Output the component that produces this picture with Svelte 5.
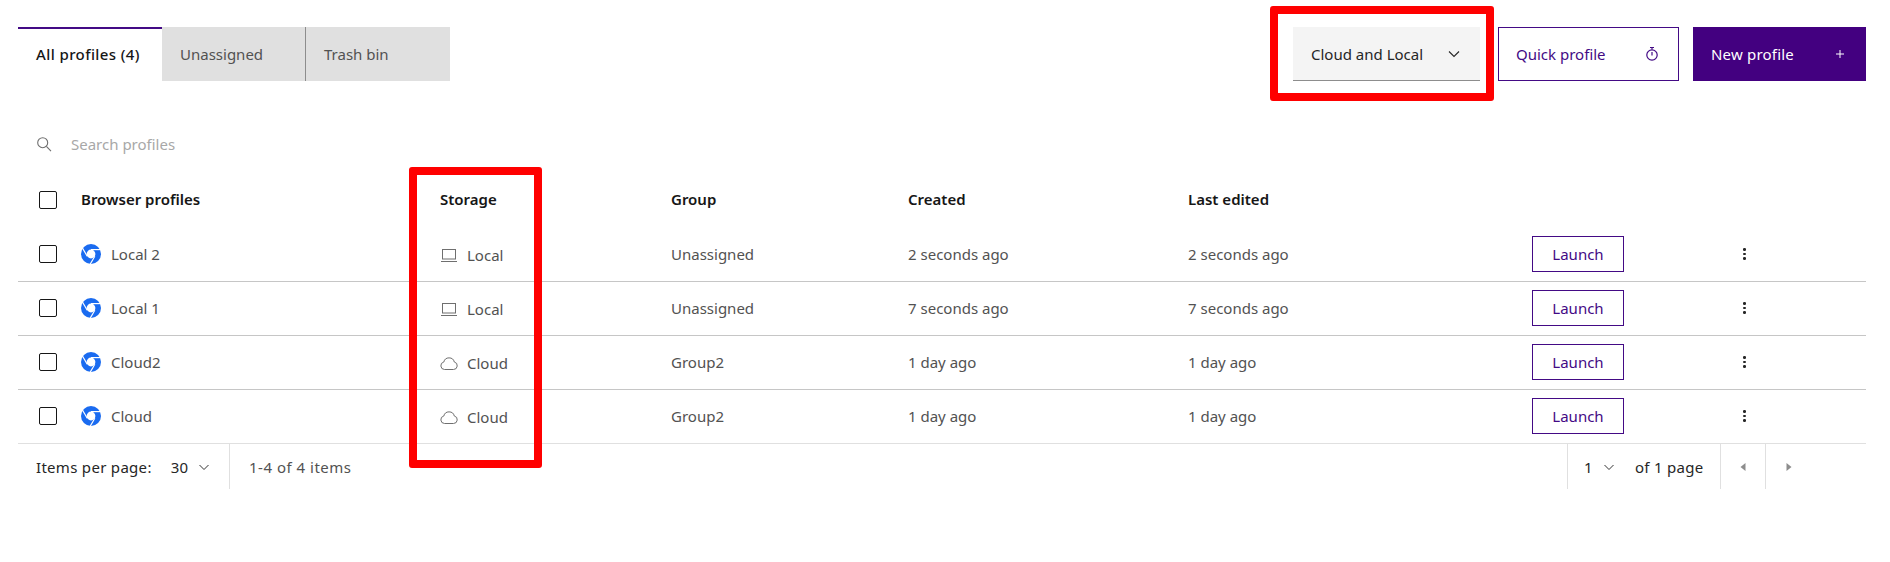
<script>
  const rows = [
    { name: 'Local 2', storage: 'Local', group: 'Unassigned', created: '2 seconds ago' },
    { name: 'Local 1', storage: 'Local', group: 'Unassigned', created: '7 seconds ago' },
    { name: 'Cloud2', storage: 'Cloud', group: 'Group2', created: '1 day ago' },
    { name: 'Cloud', storage: 'Cloud', group: 'Group2', created: '1 day ago' }
  ];
</script>

<div class="page">
  <div class="top">
    <div class="tabs">
      <div class="tab active">All profiles (4)</div>
      <div class="tab">Unassigned</div>
      <div class="tab last">Trash bin</div>
    </div>
    <div class="actions">
      <div class="select">
        <span>Cloud and Local</span>
        <svg width="16" height="16" viewBox="0 0 16 16"><path d="M3 5.500l5 5 5-5" fill="none" stroke="#262626" stroke-width="1.100"/></svg>
      </div>
      <div class="btn quick">
        <span>Quick profile</span>
        <svg width="16" height="16" viewBox="0 0 16 16" fill="none" stroke="#430a85" stroke-width="1.200">
          <circle cx="8" cy="9" r="5.200"/><path d="M6 1.500h4M8 1.500v2M8 6v3.400"/>
        </svg>
      </div>
      <div class="btn primary">
        <span>New profile</span>
        <svg width="16" height="16" viewBox="0 0 16 16"><path d="M8 4v8M4 8h8" stroke="#fff" stroke-width="1"/></svg>
      </div>
    </div>
  </div>

  <div class="search">
    <svg width="16" height="16" viewBox="0 0 16 16" fill="none" stroke="#6f6f6f" stroke-width="1.100">
      <circle cx="6.700" cy="6.700" r="5"/><path d="M10.400 10.400l4.600 4.800"/>
    </svg>
    <span>Search profiles</span>
  </div>

  <div class="row head">
    <div class="check"><i></i></div>
    <div>Browser profiles</div>
    <div>Storage</div>
    <div>Group</div>
    <div>Created</div>
    <div>Last edited</div>
  </div>

  {#each rows as r, i}
    <div class="row" class:end={i === rows.length - 1}>
      <div class="check"><i></i></div>
      <div class="name">
        <svg width="20" height="20" viewBox="0 0 20 20">
          <circle cx="10" cy="10" r="10" fill="#1a6bf0"/>
          <circle cx="10" cy="10" r="4.400" fill="#fff"/>
          <g stroke="#fff" stroke-width="1.200" fill="none">
            <path d="M10 5.600H20"/>
            <path d="M10 5.600H20" transform="rotate(120 10 10)"/>
            <path d="M10 5.600H20" transform="rotate(240 10 10)"/>
          </g>
        </svg>
        <span>{r.name}</span>
      </div>
      <div class="store">
        {#if r.storage === 'Local'}
          <svg width="18" height="18" viewBox="0 0 18 18" fill="none" stroke="#6f6f6f" stroke-width="1">
            <rect x="2.500" y="3.500" width="13" height="9.500"/><path d="M1 15.500h16"/>
          </svg>
        {:else}
          <svg width="18" height="18" viewBox="0 0 18 18" fill="none" stroke="#6f6f6f" stroke-width="1">
            <path d="M4.500 15.500h9a3.800 3.800 0 0 0 .8-7.500 5.400 5.400 0 0 0-10.500 0 3.800 3.800 0 0 0 .7 7.500z"/>
          </svg>
        {/if}
        <span>{r.storage}</span>
      </div>
      <div>{r.group}</div>
      <div>{r.created}</div>
      <div>{r.created}</div>
      <div class="launch">Launch</div>
      <div class="kebab"><b></b><b></b><b></b></div>
    </div>
  {/each}

  <div class="pager">
    <div class="left">
      <span class="dark">Items per page:</span>
      <span class="dark num">30</span>
      <svg width="12" height="12" viewBox="0 0 12 12"><path d="M1.500 4l4.500 4.500L10.500 4" fill="none" stroke="#333"/></svg>
    </div>
    <div class="count">1-4 of 4 items</div>
    <div class="right">
      <div class="pg">
        <span class="dark">1</span>
        <svg width="12" height="12" viewBox="0 0 12 12"><path d="M1.500 4l4.500 4.500L10.500 4" fill="none" stroke="#333"/></svg>
        <span class="dark of">of 1 page</span>
      </div>
      <div class="arrow"><svg width="8" height="10" viewBox="0 0 8 10"><path d="M6.500 1v8L1.500 5z" fill="#8d8d8d"/></svg></div>
      <div class="arrow"><svg width="8" height="10" viewBox="0 0 8 10"><path d="M1.500 1v8l5-4z" fill="#8d8d8d"/></svg></div>
    </div>
  </div>

  <div class="mark mark-select"></div>
  <div class="mark mark-storage"></div>
</div>

<style>
  :global(body) { margin: 0; background: #fff; }
  .page {
    position: relative;
    height: 562px;
    box-sizing: border-box;
    padding: 27px 24px 0 18px;
    font: 15px/18px "Noto Sans", Roboto, sans-serif;
    color: #525252;
    overflow: hidden;
  }
  .top { display: flex; justify-content: space-between; height: 54px; }
  .tabs { display: flex; }
  .tab {
    width: 144px; box-sizing: border-box; padding: 0 18px;
    display: flex; align-items: center;
    background: #e0e0e0; border-right: 1px solid #8d8d8d;
  }
  .tab.last { border-right: 0; }
  .tab.active {
    background: #fff; color: #161616; font-weight: 500; letter-spacing: 0.4px;
    border-right: 0; border-top: 2px solid #430a85; padding-bottom: 2px;
  }
  .actions { display: flex; }
  .select {
    width: 187px; box-sizing: border-box; padding: 0 18px;
    display: flex; align-items: center; justify-content: space-between;
    background: #f4f4f4; border-bottom: 1px solid #8d8d8d; color: #262626;
  }
  .btn {
    box-sizing: border-box; padding: 0 18px;
    display: flex; align-items: center; justify-content: space-between;
  }
  .quick { width: 181px; margin-left: 18px; padding-left: 17px; border: 1px solid #430a85; color: #430a85; }
  .primary { width: 173px; margin-left: 14px; background: #430080; color: #fff; letter-spacing: 0.2px; }
  .search {
    display: flex; align-items: center; gap: 19px;
    height: 36px; margin-top: 45px; padding-left: 18px;
    color: #a8a8a8;
  }
  .row {
    display: grid;
    grid-template-columns: 63px 359px 231px 237px 280px 344px 211px 1fr;
    align-items: center;
    height: 54px;
    padding-bottom: 1px;
    border-bottom: 1px solid #c6c6c6;
    box-sizing: border-box;
  }
  .row.end { border-bottom-color: #e0e0e0; }
  .head { border-bottom: 0; height: 56px; margin-top: 10px; color: #161616; font-weight: 600; }
  .head > div:not(.check) { padding-bottom: 2px; }
  .check { padding-left: 21px; display: flex; }
  .check i { width: 18px; height: 18px; box-sizing: border-box; border: 1px solid #161616; border-radius: 2px; }
  .name { display: flex; align-items: center; gap: 10px; }
  .store { display: flex; align-items: center; gap: 9px; padding-top: 2px; }
  .launch {
    width: 92px; height: 36px; box-sizing: border-box;
    display: flex; align-items: center; justify-content: center;
    border: 1px solid #430a85; color: #430a85;
  }
  .kebab { display: flex; flex-direction: column; gap: 2px; align-items: center; width: 3px; }
  .kebab b { width: 2.500px; height: 2.500px; border-radius: 50%; background: #262626; }
  .pager { display: flex; align-items: center; height: 45px; letter-spacing: 0.3px; }
  .left { display: flex; align-items: center; width: 212px; box-sizing: border-box; padding-left: 18px; height: 100%; border-right: 1px solid #e0e0e0; }
  .dark { color: #262626; }
  .num { margin: 0 10px 0 19px; }
  .count { padding-left: 19px; letter-spacing: 0.5px; }
  .right { display: flex; height: 100%; margin-left: auto; margin-right: 55px; }
  .pg { display: flex; align-items: center; width: 154px; box-sizing: border-box; padding-left: 16px; border-left: 1px solid #e0e0e0; border-right: 1px solid #e0e0e0; }
  .pg svg { margin-left: 10px; }
  .of { margin-left: 20px; }
  .arrow { width: 45px; box-sizing: border-box; display: flex; align-items: center; justify-content: center; border-right: 1px solid #e0e0e0; }
  .arrow:last-child { border-right: 0; }
  .mark { position: absolute; box-sizing: border-box; border: 8px solid #f00; border-radius: 3px; }
  .mark-select { left: 1270px; top: 6px; width: 224px; height: 95px; }
  .mark-storage { left: 409px; top: 167px; width: 133px; height: 301px; }
</style>
